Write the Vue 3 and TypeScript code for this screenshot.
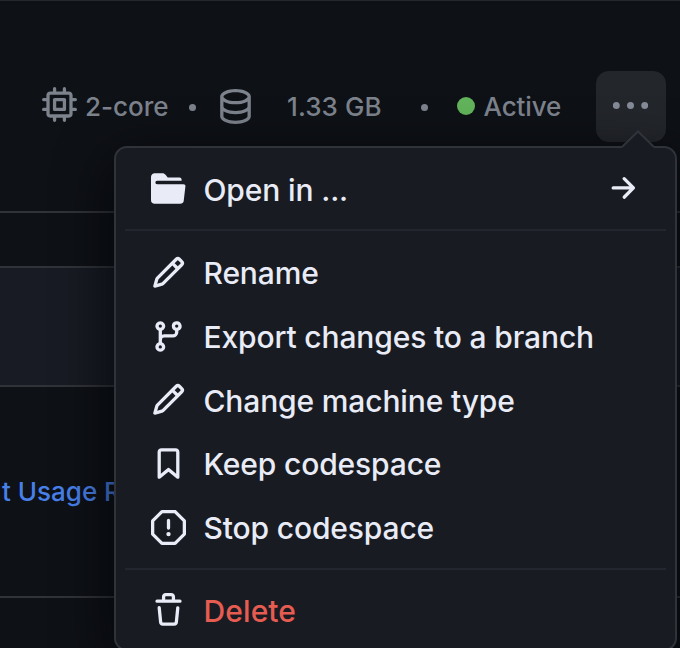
<script setup lang="ts">
interface MenuItem {
  label: string
  icon: string
  arrow?: boolean
  danger?: boolean
}

const icons: Record<string, string> = {
  cpu: 'M6.5.75V2h3V.75a.75.75 0 0 1 1.5 0V2h1.25c.966 0 1.75.784 1.75 1.75V5h1.25a.75.75 0 0 1 0 1.5H14v3h1.25a.75.75 0 0 1 0 1.5H14v1.25A1.75 1.75 0 0 1 12.25 14H11v1.25a.75.75 0 0 1-1.5 0V14h-3v1.25a.75.75 0 0 1-1.5 0V14H3.75A1.75 1.75 0 0 1 2 12.25V11H.75a.75.75 0 0 1 0-1.5H2v-3H.75a.75.75 0 0 1 0-1.5H2V3.75C2 2.784 2.784 2 3.75 2H5V.75a.75.75 0 0 1 1.5 0Zm5.75 11.75a.25.25 0 0 0 .25-.25v-8.5a.25.25 0 0 0-.25-.25h-8.5a.25.25 0 0 0-.25.25v8.5c0 .138.112.25.25.25ZM5.75 5h4.5a.75.75 0 0 1 .75.75v4.5a.75.75 0 0 1-.75.75h-4.5a.75.75 0 0 1-.75-.75v-4.5A.75.75 0 0 1 5.75 5Zm.75 4.5h3v-3h-3Z',
  database: 'M1 3.5c0-.626.292-1.165.7-1.59.406-.422.956-.767 1.579-1.041C4.525.32 6.195 0 8 0s3.475.32 4.722.869c.622.274 1.172.62 1.578 1.04.408.426.7.965.7 1.591v9c0 .626-.292 1.165-.7 1.59-.406.422-.956.767-1.579 1.041C11.476 15.68 9.806 16 8 16s-3.475-.32-4.721-.869c-.623-.274-1.173-.619-1.579-1.041-.408-.425-.7-.964-.7-1.59Zm1.5 0c0 .133.058.318.282.551.227.237.591.483 1.101.707C4.898 5.205 6.353 5.5 8 5.5s3.101-.295 4.118-.742c.508-.224.873-.471 1.1-.708.224-.232.282-.417.282-.55 0-.133-.058-.318-.282-.551-.227-.237-.591-.483-1.101-.707C11.102 1.795 9.647 1.5 8 1.5s-3.101.295-4.118.742c-.508.224-.873.471-1.1.708-.224.232-.282.417-.282.55Zm0 4.5c0 .133.058.318.282.551.227.237.591.483 1.101.707C4.898 9.705 6.353 10 8 10s3.101-.295 4.118-.742c.508-.224.873-.471 1.1-.708.224-.232.282-.417.282-.55V5.724c-.241.15-.503.286-.778.407C11.475 6.68 9.805 7 8 7s-3.475-.32-4.721-.869a6.15 6.15 0 0 1-.779-.407Zm0 2.225V12.5c0 .133.058.318.282.55.227.237.592.484 1.1.708 1.016.447 2.471.742 4.118.742s3.102-.295 4.117-.742c.51-.224.874-.47 1.101-.707.224-.233.282-.418.282-.551v-2.275c-.241.15-.503.285-.778.406-1.247.549-2.917.869-4.722.869s-3.475-.32-4.721-.869a6.327 6.327 0 0 1-.779-.406Z',
  kebab: 'M8 9.6a1.6 1.6 0 1 0 0-3.2 1.6 1.6 0 0 0 0 3.2ZM1.5 9.6a1.6 1.6 0 1 0 0-3.2 1.6 1.6 0 0 0 0 3.2Zm13 0a1.6 1.6 0 1 0 0-3.2 1.6 1.6 0 0 0 0 3.2Z',
  folder: 'M.513 1.513A1.75 1.75 0 0 1 1.75 1h3.5c.55 0 1.07.26 1.4.7l.9 1.2a.25.25 0 0 0 .2.1H13a1 1 0 0 1 1 1v.5H2.75a.75.75 0 0 0 0 1.5h11.978a1 1 0 0 1 .994 1.117L15 13.25A1.75 1.75 0 0 1 13.25 15H1.75A1.75 1.75 0 0 1 0 13.25V2.75c0-.464.184-.91.513-1.237Z',
  pencil: 'M11.013 1.427a1.75 1.75 0 0 1 2.474 0l1.086 1.086a1.75 1.75 0 0 1 0 2.474l-8.61 8.61c-.21.21-.47.364-.756.445l-3.251.93a.75.75 0 0 1-.927-.928l.929-3.25c.081-.286.235-.547.445-.758l8.61-8.61Zm.176 4.823L9.75 4.81l-6.286 6.287a.253.253 0 0 0-.064.108l-.558 1.953 1.953-.558a.253.253 0 0 0 .108-.064Zm1.238-3.763a.25.25 0 0 0-.354 0L10.811 3.75l1.439 1.44 1.263-1.263a.25.25 0 0 0 0-.354Z',
  branch: 'M9.5 3.25a2.25 2.25 0 1 1 3 2.122V6A2.5 2.5 0 0 1 10 8.5H6a1 1 0 0 0-1 1v1.128a2.251 2.251 0 1 1-1.5 0V5.372a2.25 2.25 0 1 1 1.5 0v1.836A2.493 2.493 0 0 1 6 7h4a1 1 0 0 0 1-1v-.628A2.25 2.25 0 0 1 9.5 3.25Zm-6 0a.75.75 0 1 0 1.5 0 .75.75 0 0 0-1.5 0Zm8.25-.75a.75.75 0 1 0 0 1.5.75.75 0 0 0 0-1.5ZM4.25 12a.75.75 0 1 0 0 1.5.75.75 0 0 0 0-1.5Z',
  bookmark: 'M3 2.75C3 1.784 3.784 1 4.75 1h6.5c.966 0 1.75.784 1.75 1.75v11.5a.75.75 0 0 1-1.227.579L8 11.722l-3.773 3.107A.751.751 0 0 1 3 14.25Zm1.75-.25a.25.25 0 0 0-.25.25v9.91l3.023-2.489a.75.75 0 0 1 .954 0l3.023 2.49V2.75a.25.25 0 0 0-.25-.25Z',
  stop: 'M4.47.22A.749.749 0 0 1 5 0h6c.199 0 .389.079.53.22l4.25 4.25c.141.14.22.331.22.53v6a.749.749 0 0 1-.22.53l-4.25 4.25A.749.749 0 0 1 11 16H5a.749.749 0 0 1-.53-.22L.22 11.53A.749.749 0 0 1 0 11V5c0-.199.079-.389.22-.53Zm.84 1.28L1.5 5.31v5.38l3.81 3.81h5.38l3.81-3.81V5.31L10.69 1.5ZM8 4a.75.75 0 0 1 .75.75v3.5a.75.75 0 0 1-1.5 0v-3.5A.75.75 0 0 1 8 4Zm0 8a1 1 0 1 1 0-2 1 1 0 0 1 0 2Z',
  trash: 'M11 1.75V3h2.25a.75.75 0 0 1 0 1.5H2.75a.75.75 0 0 1 0-1.5H5V1.75C5 .784 5.784 0 6.75 0h2.5C10.216 0 11 .784 11 1.75ZM4.496 6.675l.66 6.6a.25.25 0 0 0 .249.225h5.19a.25.25 0 0 0 .249-.225l.66-6.6a.75.75 0 0 1 1.492.149l-.66 6.6A1.748 1.748 0 0 1 10.595 15h-5.19a1.75 1.75 0 0 1-1.741-1.575l-.66-6.6a.75.75 0 1 1 1.492-.15ZM6.5 1.75V3h3V1.75a.25.25 0 0 0-.25-.25h-2.5a.25.25 0 0 0-.25.25Z',
  arrow: 'M8.22 2.97a.75.75 0 0 1 1.06 0l4.25 4.25a.75.75 0 0 1 0 1.06l-4.25 4.25a.751.751 0 0 1-1.042-.018.751.751 0 0 1-.018-1.042l2.97-2.97H3.75a.75.75 0 0 1 0-1.5h7.44L8.22 4.03a.75.75 0 0 1 0-1.06Z',
}

const groups: MenuItem[][] = [
  [{ label: 'Open in ...', icon: 'folder', arrow: true }],
  [
    { label: 'Rename', icon: 'pencil' },
    { label: 'Export changes to a branch', icon: 'branch' },
    { label: 'Change machine type', icon: 'pencil' },
    { label: 'Keep codespace', icon: 'bookmark' },
    { label: 'Stop codespace', icon: 'stop' },
  ],
  [{ label: 'Delete', icon: 'trash', danger: true }],
]
</script>

<template>
  <main class="page">
    <header class="summary">
      <svg class="icon cpu" viewBox="0 0 16 16"><path :d="icons.cpu" /></svg>
      <span class="cores">2-core</span>
      <i class="sep first"></i>
      <svg class="icon" viewBox="0 0 16 16"><path :d="icons.database" /></svg>
      <span class="disk">1.33 GB</span>
      <i class="sep second"></i>
      <i class="status"></i>
      <span class="state">Active</span>
      <button class="more" aria-label="Codespace options">
        <svg class="icon" viewBox="0 0 16 16"><path :d="icons.kebab" /></svg>
      </button>
    </header>
    <section class="gap"></section>
    <section class="band"></section>
    <section class="usage"><a class="link">t Usage Report</a></section>

    <nav class="menu">
      <svg class="caret" viewBox="0 0 34 18">
        <path class="caret-fill" d="M1 18 17 2 33 18Z" />
        <path class="caret-line" d="M1.5 16.5 17 1.5 32.5 16.5" />
      </svg>
      <ul v-for="(group, g) in groups" :key="g" class="group">
        <li v-for="item in group" :key="item.label" class="item" :class="{ danger: item.danger }">
          <svg class="icon" viewBox="0 0 16 16"><path :d="icons[item.icon]" /></svg>
          <span class="label">{{ item.label }}</span>
          <svg v-if="item.arrow" class="icon arrow" viewBox="0 0 16 16"><path :d="icons.arrow" /></svg>
        </li>
      </ul>
    </nav>
  </main>
</template>

<style>
body {
  background: #0e1116;
}
</style>

<style scoped>
.page {
  position: relative;
  box-sizing: border-box;
  width: 680px;
  height: 648px;
  overflow: hidden;
  background: #0e1116;
  border-top: 1px solid #24272d;
  font-family: Inter, "Liberation Sans", sans-serif;
}
.icon {
  flex: none;
  display: block;
  width: 35px;
  height: 35px;
  fill: currentColor;
}
.summary {
  box-sizing: border-box;
  display: flex;
  align-items: center;
  height: 212px;
  padding: 0 14px 0 42px;
  border-bottom: 2px solid #303338;
  color: #7d838d;
  font-size: 26px;
  font-weight: 450;
  white-space: nowrap;
}
.cpu {
  margin-bottom: 3px;
}
.cores {
  width: 83px;
  margin-left: 8px;
}
.sep {
  flex: none;
  width: 7px;
  height: 7px;
  border-radius: 50%;
  background: #7d838d;
}
.first {
  margin: 3px 22px 0 21px;
}
.disk {
  width: 97px;
  margin-left: 34px;
  letter-spacing: 0.1px;
}
.second {
  margin: 3px 29px 0 36.5px;
}
.status {
  flex: none;
  width: 18px;
  height: 18px;
  border-radius: 50%;
  background: #62b45b;
}
.state {
  margin-left: 9px;
  letter-spacing: -0.1px;
}
.more {
  display: flex;
  align-items: center;
  justify-content: center;
  width: 70px;
  height: 71px;
  margin-left: auto;
  padding: 0 1px 2px 0;
  border: 0;
  border-radius: 13px;
  background: #23262b;
  color: #868b99;
}
.gap {
  height: 53px;
}
.band {
  box-sizing: border-box;
  height: 121px;
  border-top: 2px solid #303338;
  border-bottom: 2px solid #303338;
  background: #181b23;
}
.usage {
  box-sizing: border-box;
  display: flex;
  align-items: center;
  height: 211px;
  padding-left: 2px;
  border-bottom: 2px solid #303338;
}
.link {
  color: #4880ea;
  font-size: 26px;
  font-weight: 450;
  white-space: nowrap;
}
.menu {
  position: absolute;
  top: 145px;
  left: 114px;
  box-sizing: border-box;
  width: 563px;
  height: 505px;
  padding: 9px 9px 0;
  border: 2px solid #303339;
  border-radius: 13px;
  background: #181b22;
  box-shadow: 0 16px 56px rgba(1, 3, 8, 0.85);
  color: #e9ecf6;
}
.caret {
  position: absolute;
  top: -18px;
  right: 20px;
  width: 34px;
  height: 18px;
}
.caret-fill {
  fill: #181b22;
}
.caret-line {
  fill: none;
  stroke: #303339;
  stroke-width: 2;
}
.group {
  margin: 0;
  padding: 0;
  list-style: none;
}
.group + .group {
  margin-top: 8.4px;
  padding-top: 9.2px;
  border-top: 2px solid #23262e;
}
.group:last-child {
  padding-top: 8.6px;
}
.item {
  display: flex;
  align-items: center;
  height: 63.8px;
  padding: 0 26px;
}
.label {
  margin-left: 17.5px;
  padding-top: 1.4px;
  font-size: 30px;
  font-weight: 450;
  letter-spacing: -0.14px;
  white-space: nowrap;
}
.arrow {
  margin-left: auto;
}
.danger .label {
  color: #e65c51;
  font-weight: 500;
  letter-spacing: 0.1px;
}
</style>
